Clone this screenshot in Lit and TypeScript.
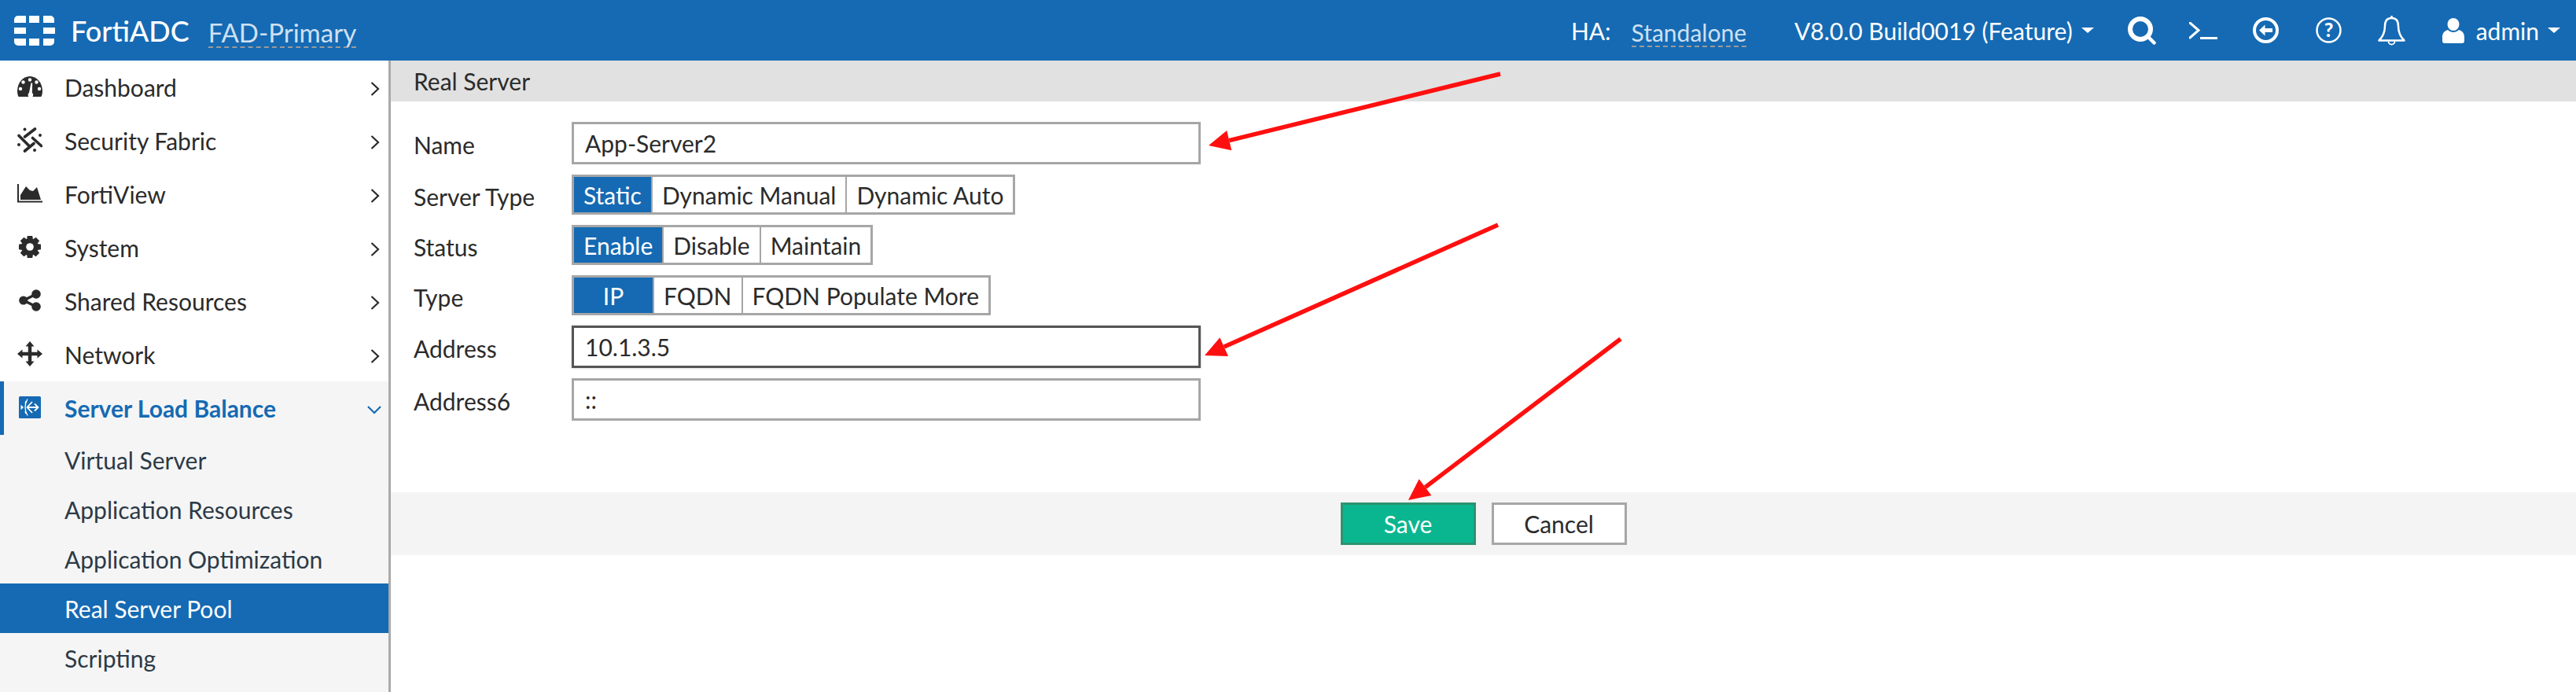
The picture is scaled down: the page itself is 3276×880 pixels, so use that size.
import { LitElement, html, css, svg } from "lit";
import { customElement } from "lit/decorators.js";

const ICONS: Record<string, any> = {
  dash: html`<svg width="32" height="26" viewBox="0 0 32 26"><path fill="#2b2b2b" d="M1.600 26C.6 24 0 21.500 0 19 0 8.500 7.200 0 16 0s16 8.500 16 19c0 2.500-.6 5-1.600 7z"/><g fill="#fff"><circle cx="16" cy="4.500" r="2.200"/><circle cx="7.500" cy="7.500" r="2.200"/><circle cx="24.500" cy="7.500" r="2.200"/><circle cx="4" cy="16" r="2.200"/><circle cx="28" cy="16" r="2.200"/><path d="M15 21l2.400-12.500h1.800L18.800 21a3.300 3.300 0 1 1-3.800 0z"/></g></svg>`,
  fabric: html`<svg width="32" height="32" viewBox="0 0 32 32" fill="none" stroke="#2b2b2b" stroke-width="3.600" stroke-linecap="round"><path d="M9.500 12L22.500 2M2 10.500L14.500 23M19.500 13.500L30.500 23.500M9.500 30L21 20.500"/><path stroke-width="4" d="M9.500 2.500h.01M29 10h.01M2 22h.01M22 29h.01"/></svg>`,
  chart: html`<svg width="32" height="24" viewBox="0 0 32 24"><path fill="none" stroke="#2b2b2b" stroke-width="2" d="M1 0V22.500H32"/><path fill="#2b2b2b" d="M4 20V14L11 3l5 5 4 1 5-5 5 16z"/></svg>`,
  gear: html`<svg width="28" height="28" viewBox="0 0 28 28"><g fill="#2b2b2b"><circle cx="14" cy="14" r="10.500"/>${[0, 45, 90, 135, 180, 225, 270, 315].map((a) => svg`<path transform="rotate(${a} 14 14)" d="M10.800 0h6.400l1 6h-8.400z"/>`)}</g><circle cx="14" cy="14" r="4.800" fill="#fff"/></svg>`,
  share: html`<svg width="28" height="28" viewBox="0 0 28 28" fill="#2b2b2b"><path d="M6 14L22 6M6 14l16 8" stroke="#2b2b2b" stroke-width="3.600"/><circle cx="5.800" cy="14" r="5.600"/><circle cx="22" cy="6" r="5.800"/><circle cx="22" cy="22" r="5.800"/></svg>`,
  move: html`<svg width="32" height="32" viewBox="0 0 32 32" fill="#2b2b2b"><path d="M16 5V27M5 16H27" stroke="#2b2b2b" stroke-width="4.400"/><path d="M16 0l5.500 6.500h-11zM16 32l-5.500-6.500h11zM0 16l6.500-5.500v11zM32 16l-6.500 5.500v-11z"/></svg>`,
  slb: html`<svg width="28" height="28" viewBox="0 0 28 28"><rect width="28" height="28" rx="1.500" fill="#156ab3"/><g fill="none" stroke="#fff"><path stroke-width="1.300" d="M11 3.500Q5 14 11 24.500M9 6Q8.500 8 8 9M8 19q.5 2 1 3"/><path stroke-width="1.800" d="M17 7l-6.500 7 6.500 7M11 14H25M20 9.500l4.500 4.500-4.500 4.500"/></g><path fill="#fff" d="M6 14L2.500 10.800v6.400z"/></svg>`,
};

const TOP = [
  ["dash", "Dashboard"],
  ["fabric", "Security Fabric"],
  ["chart", "FortiView"],
  ["gear", "System"],
  ["share", "Shared Resources"],
  ["move", "Network"],
];

const SUB = ["Virtual Server", "Application Resources", "Application Optimization", "Real Server Pool", "Scripting"];

const ARROWS = [
  [1908, 94, 1537, 185],
  [1905, 286, 1532, 452],
  [2061, 431, 1791, 636],
];

function arrow([x1, y1, x2, y2]: number[]) {
  const d = Math.hypot(x2 - x1, y2 - y1);
  const ux = (x2 - x1) / d;
  const uy = (y2 - y1) / d;
  const bx = x2 - ux * 27;
  const by = y2 - uy * 27;
  const pts = `${x2},${y2} ${bx - uy * 13},${by + ux * 13} ${bx + uy * 13},${by - ux * 13}`;
  return svg`<line x1=${x1} y1=${y1} x2=${bx} y2=${by} stroke="#ff0f0f" stroke-width="5.500"/><polygon points=${pts} fill="#ff0f0f"/>`;
}

@customElement("app-root")
export class AppRoot extends LitElement {
  static styles = css`
    :host {
      display: block;
      position: relative;
      width: 3276px;
      height: 880px;
      overflow: hidden;
      background: #fff;
      font-family: Lato, "Liberation Sans", sans-serif;
      font-size: 30px;
      color: #2b2b2b;
    }
    .header {
      display: flex;
      align-items: center;
      height: 77px;
      background: #156ab3;
      color: #fff;
      padding: 0 20px 0 18px;
      box-sizing: border-box;
    }
    .logo { margin-right: 20px; }
    .brand { font-size: 36px; font-weight: 500; margin-right: 24px; }
    .host-name {
      font-size: 33px;
      color: #cfe0f2;
      border-bottom: 2px dashed #9a9a9a;
      line-height: 36px;
      margin-top: 6px;
    }
    .right { display: flex; align-items: center; margin-left: auto; }
    .ha { margin-right: 26px; }
    .link {
      color: #cfe0f2;
      border-bottom: 2px dashed #9a9a9a;
      line-height: 34px;
      margin-top: 6px;
      margin-right: 61px;
    }
    .caret {
      width: 0;
      height: 0;
      border-left: 8px solid transparent;
      border-right: 8px solid transparent;
      border-top: 7px solid #fff;
      margin-left: 11px;
    }
    .right svg { display: block; }
    .version { display: flex; align-items: center; margin-right: 43px; }
    .search { margin-right: 42px; }
    .console { margin-right: 45px; }
    .back { margin-right: 47px; }
    .help { margin-right: 46px; }
    .bell { margin-right: 47px; }
    .user { margin-right: 15px; }
    .account { display: flex; align-items: center; }
    .body { display: flex; height: 803px; }
    .side {
      flex: none;
      width: 494px;
      border-right: 3px solid #aaa;
      display: flex;
      flex-direction: column;
    }
    .item {
      display: flex;
      align-items: center;
      height: 68px;
      flex: none;
      box-sizing: border-box;
    }
    .ic {
      width: 82px;
      flex: none;
      display: flex;
      justify-content: center;
      padding-right: 6px;
      box-sizing: border-box;
      margin-bottom: 2px;
    }
    .ic svg { display: block; }
    .label { flex: 1; }
    .chev { margin-right: 11px; margin-top: 4px; display: block; }
    .open { background: #f5f5f5; flex: 1; }
    .open-head {
      color: #156ab3;
      font-weight: 700;
      box-shadow: inset 5px 0 0 #156ab3;
    }
    .chev-open { margin-right: 9px; margin-top: 4px; display: block; }
    .sub {
      display: flex;
      align-items: center;
      height: 63px;
      padding-left: 82px;
      color: #2c3a47;
    }
    .sub.on { background: #156ab3; color: #fff; }
    .main { flex: 1; display: flex; flex-direction: column; }
    .title {
      height: 52px;
      background: #e1e1e1;
      display: flex;
      align-items: center;
      padding-left: 29px;
      flex: none;
    }
    .form {
      display: flex;
      flex-direction: column;
      gap: 13px;
      padding: 26px 0 0 29px;
      height: 497px;
      box-sizing: border-box;
    }
    .row { display: flex; align-items: center; }
    .row > label, .row > .lab { width: 201px; flex: none; padding-top: 4px; }
    input {
      width: 800px;
      height: 54px;
      box-sizing: border-box;
      border: 3px solid #a6a6a6;
      padding: 0 14px;
      font: inherit;
      color: #2b2b2b;
      background: #fff;
      outline: none;
    }
    input.focus { border-color: #555; box-shadow: 0 0 3px #ccc; }
    .group {
      display: inline-flex;
      height: 51px;
      box-sizing: border-box;
      border: 3px solid #a6a6a6;
    }
    .opt {
      display: flex;
      align-items: center;
      justify-content: center;
      padding: 0 12px;
      border-left: 2px solid #a6a6a6;
    }
    .opt:first-child { border-left: 0; }
    .opt.on { background: #156ab3; color: #fff; }
    .opt.wide { min-width: 100px; box-sizing: border-box; }
    .footer {
      height: 80px;
      flex: none;
      background: #f4f4f4;
      display: flex;
      justify-content: center;
      align-items: center;
      gap: 20px;
    }
    .btn {
      width: 172px;
      height: 54px;
      box-sizing: border-box;
      border: 3px solid #a6a6a6;
      background: #fff;
      font: inherit;
      color: #2b2b2b;
      padding: 0;
    }
    .btn.save { background: #0ab68f; border-color: #2d9272; color: #fff; }
    .arrows { position: absolute; left: 0; top: 0; pointer-events: none; }
  `;

  private group(opts: string[], wideFirst = false) {
    return html`<div class="group">
      ${opts.map(
        (o, i) => html`<div class="opt ${i === 0 ? "on" : ""} ${i === 0 && wideFirst ? "wide" : ""}">${o}</div>`
      )}
    </div>`;
  }

  render() {
    return html`
      <div class="header">
        <svg class="logo" width="52" height="39" viewBox="0 0 52 39" fill="#fff">
          <path d="M5 1H15V10H0V6a5 5 0 0 1 5-5zM19 1H32V10H19zM37 1H46a5 5 0 0 1 5 5V10H37z" />
          <path d="M0 16H15V24H0zM37 16H52V24H37z" />
          <path d="M0 30H15V39H5a5 5 0 0 1-5-5zM19 30H32V39H19zM37 30H51V34a5 5 0 0 1-5 5H37z" />
        </svg>
        <span class="brand">FortiADC</span>
        <span class="host-name">FAD-Primary</span>
        <div class="right">
          <span class="ha">HA:</span>
          <span class="link">Standalone</span>
          <span class="version">V8.0.0 Build0019 (Feature)<i class="caret"></i></span>
          <svg class="search" width="36" height="36" viewBox="0 0 36 36" fill="none" stroke="#fff"><circle cx="16" cy="16" r="13" stroke-width="6" /><path d="M26 26l7.500 7.500" stroke-width="4.500" stroke-linecap="round" /></svg>
          <svg class="console" width="36" height="22" viewBox="0 0 36 22" fill="none" stroke="#fff" stroke-width="3"><path d="M1 1l11 9.500L1 20" stroke-linecap="round" /><path d="M14 20.500H36" /></svg>
          <svg class="back" width="33" height="33" viewBox="0 0 33 33"><circle cx="16.500" cy="16.500" r="14.500" fill="none" stroke="#fff" stroke-width="4" /><path fill="#fff" d="M8 16.500l7.500-7v4.500H25v5H15.500v4.500z" /></svg>
          <svg class="help" width="33" height="33" viewBox="0 0 33 33"><circle cx="16.500" cy="16.500" r="15" fill="none" stroke="#fff" stroke-width="2.500" /><text x="16.500" y="25" text-anchor="middle" font-family="Lato" font-weight="900" font-size="25" fill="#fff">?</text></svg>
          <svg class="bell" width="35" height="38" viewBox="0 0 35 38" fill="none" stroke="#fff" stroke-width="2.500"><path stroke-linejoin="round" d="M17.500 3C11 3 9 8 9 13c0 9-3 14-7.500 18.500h32C29 27 26 22 26 13c0-5-2-10-8.500-10z" /><path d="M17.500 0v3" /><path stroke-width="1.800" d="M13.500 32.500a4 4 0 0 0 8 0" /></svg>
          <svg class="user" width="28" height="32" viewBox="0 0 28 32" fill="#fff"><ellipse cx="14" cy="8" rx="7.500" ry="8" /><path d="M7 15c2 2 4.500 3 7 3s5-1 7-3c4 1 7 4 7 9v5a3 3 0 0 1-3 3H3a3 3 0 0 1-3-3v-5c0-5 3-8 7-9z" /></svg>
          <span class="account">admin<i class="caret"></i></span>
        </div>
      </div>
      <div class="body">
        <div class="side">
          ${TOP.map(
            ([ic, t]) => html`<div class="item">
              <span class="ic">${ICONS[ic]}</span><span class="label">${t}</span>
              <svg class="chev" width="12" height="20" viewBox="0 0 12 20" fill="none" stroke="#2b2b2b" stroke-width="2.200"><path d="M1.500 2l8.500 8-8.500 8" /></svg>
            </div>`
          )}
          <div class="open">
            <div class="item open-head">
              <span class="ic">${ICONS.slb}</span><span class="label">Server Load Balance</span>
              <svg class="chev-open" width="18" height="12" viewBox="0 0 18 12" fill="none" stroke="#156ab3" stroke-width="2.200"><path d="M1 2l8 8 8-8" /></svg>
            </div>
            ${SUB.map((s, i) => html`<div class="sub ${i === 3 ? "on" : ""}">${s}</div>`)}
          </div>
        </div>
        <div class="main">
          <div class="title">Real Server</div>
          <div class="form">
            <div class="row"><label>Name</label><input value="App-Server2" /></div>
            <div class="row"><span class="lab">Server Type</span>${this.group(["Static", "Dynamic Manual", "Dynamic Auto"])}</div>
            <div class="row"><span class="lab">Status</span>${this.group(["Enable", "Disable", "Maintain"])}</div>
            <div class="row"><span class="lab">Type</span>${this.group(["IP", "FQDN", "FQDN Populate More"], true)}</div>
            <div class="row"><label>Address</label><input class="focus" value="10.1.3.5" /></div>
            <div class="row"><label>Address6</label><input value="::" /></div>
          </div>
          <div class="footer">
            <button class="btn save">Save</button>
            <button class="btn">Cancel</button>
          </div>
        </div>
      </div>
      <svg class="arrows" width="3276" height="880" viewBox="0 0 3276 880">${ARROWS.map(arrow)}</svg>
    `;
  }
}
